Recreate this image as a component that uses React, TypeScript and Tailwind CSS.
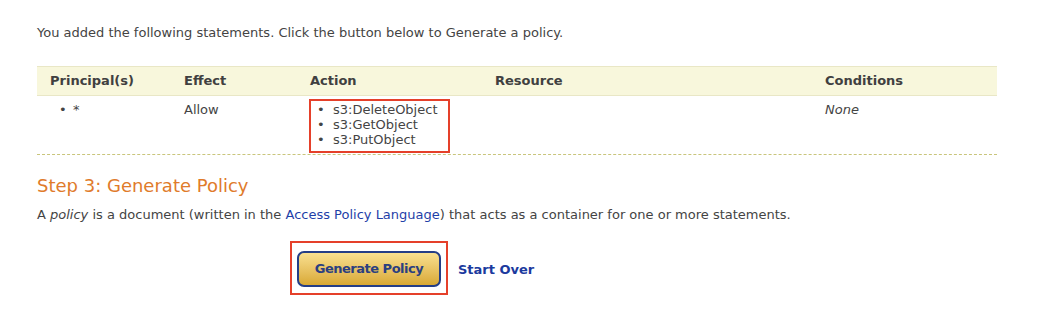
const statements = [
  {
    principals: ["*"],
    effect: "Allow",
    actions: ["s3:DeleteObject", "s3:GetObject", "s3:PutObject"],
    resource: "",
    conditions: "None",
  },
];

const headers = [
  { label: "Principal(s)", w: "w-[134px]" },
  { label: "Effect", w: "w-[126px]" },
  { label: "Action", w: "w-[185px]" },
  { label: "Resource", w: "w-[330px]" },
  { label: "Conditions", w: "w-[185px]" },
];

export default function App() {
  return (
    <div
      className="w-[1039px] h-[313px] bg-white text-[13px] text-[#444] pl-[37px] pt-[24px]"
      style={{ fontFamily: '"DejaVu Sans", Verdana, sans-serif' }}
    >
      <p className="leading-[18px]">
        You added the following statements. Click the button below to Generate a policy.
      </p>

      <table className="mt-[24px] w-[960px] border-collapse table-fixed">
        <thead>
          <tr className="bg-[#f8f7dc] border-y border-[#e9e7c6]">
            {headers.map((h) => (
              <th
                key={h.label}
                className={`${h.w} text-left font-bold pl-[13px] h-[29px] leading-[16px] text-[#404040]`}
              >
                {h.label}
              </th>
            ))}
          </tr>
        </thead>
        <tbody>
          {statements.map((s, i) => (
            <tr key={i} className="align-top">
              <td className="pt-[6px] pl-[22px]">
                {s.principals.map((p) => (
                  <div key={p} className="flex leading-[15px]">
                    <span className="w-[14px]">•</span>
                    <span>{p}</span>
                  </div>
                ))}
              </td>
              <td className="pt-[6px] pl-[13px] leading-[15px]">{s.effect}</td>
              <td className="pt-[3px] pl-[12px] pb-[1px]">
                <ul className="inline-block border-2 border-[#e5402a] pl-[6px] pr-[11px] pt-[1px] pb-[4px]">
                  {s.actions.map((a) => (
                    <li key={a} className="flex leading-[15px]">
                      <span className="w-[16px]">•</span>
                      <span>{a}</span>
                    </li>
                  ))}
                </ul>
              </td>
              <td className="pt-[6px] pl-[13px] leading-[15px]">{s.resource}</td>
              <td className="pt-[6px] pl-[13px] leading-[15px] italic">{s.conditions}</td>
            </tr>
          ))}
        </tbody>
      </table>
      <div className="w-[960px] border-t border-dashed border-[#c9c57c]" />

      <h2 className="mt-[20px] text-[18px] leading-[22px] text-[#e07b2b]">Step 3: Generate Policy</h2>
      <p className="mt-[9px] leading-[18px]">
        A <i>policy</i> is a document (written in the{" "}
        <a className="text-[#1f3fa8]">Access Policy Language</a>) that acts as a container for one or more
        statements.
      </p>

      <div className="mt-[17px] flex items-center pl-[253px]">
        <div className="border-2 border-[#e5402a] pl-[5px] pr-[5px] pt-[8px] pb-[6px]">
          <button className="w-[144px] h-[36px] rounded-[7px] border-2 border-[#253e86] bg-gradient-to-b from-[#f9e08f] to-[#d9a932] text-[#2b3f80] font-bold text-[13px] tracking-[-0.5px]">
            Generate Policy
          </button>
        </div>
        <a className="ml-[10px] mt-[3px] font-bold text-[#1b3a9e] text-[13px]">Start Over</a>
      </div>
    </div>
  );
}
